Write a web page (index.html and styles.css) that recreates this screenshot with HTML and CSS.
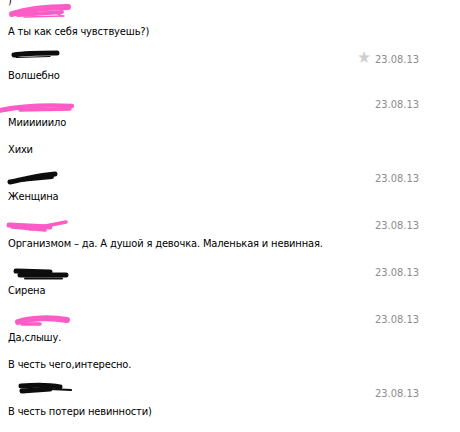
FILE: index.html
```html
<!DOCTYPE html>
<html lang="ru">
<head>
<meta charset="UTF-8" />
<title>Диалог</title>
<link rel="stylesheet" href="styles.css">
</head>
<body>

<svg width="0" height="0" class="defs">
  <filter id="marker"><feGaussianBlur stdDeviation="0.55"/></filter>
</svg>

<div class="dialog">
  <p class="line cut">)</p>

  <div class="msg first">
    <div class="head">
      <svg class="name pink" viewBox="0 0 80 16" width="80" height="16">
        <path d="M12 8 C25 4 45 1 68 1" stroke-width="6"/>
        <path d="M18 9 L62 6" stroke-width="4"/>
        <path d="M24 11 L64 10" stroke-width="1.4"/>
        <path d="M52 5 L62 10" stroke-width="1.8"/>
      </svg>
    </div>
    <p class="line">А ты как себя чувствуешь?)</p>
  </div>

  <div class="msg">
    <div class="head">
      <svg class="name ink" viewBox="0 0 80 16" width="80" height="16">
        <path d="M14 5 C25 3 45 3 57 3" stroke-width="5"/>
        <path d="M16 7.5 L50 6.5" stroke-width="1.2"/>
      </svg>
      <span class="date"><span class="star">★</span>23.08.13</span>
    </div>
    <p class="line">Волшебно</p>
  </div>

  <div class="msg">
    <div class="head">
      <svg class="name pink" viewBox="0 0 80 16" width="80" height="16">
        <path d="M1 13 C20 9 50 8 72 9" stroke-width="4.5"/>
        <path d="M20 13 L70 12" stroke-width="3.5"/>
        <path d="M0 15 L25 11" stroke-width="1.4"/>
      </svg>
      <span class="date">23.08.13</span>
    </div>
    <p class="line">Миииииило</p>
    <p class="line">Хихи</p>
  </div>

  <div class="msg">
    <div class="head">
      <svg class="name ink" viewBox="0 0 80 16" width="80" height="16">
        <path d="M10 11 C25 8 40 4 55 3" stroke-width="5"/>
        <path d="M20 9 L52 6" stroke-width="4"/>
      </svg>
      <span class="date">23.08.13</span>
    </div>
    <p class="line">Женщина</p>
  </div>

  <div class="msg">
    <div class="head">
      <svg class="name pink" viewBox="0 0 80 16" width="80" height="16">
        <path d="M9 7 L50 9" stroke-width="5"/>
        <path d="M30 11 L66 4" stroke-width="3.5"/>
        <path d="M12 9 L45 12" stroke-width="3.5"/>
      </svg>
      <span class="date">23.08.13</span>
    </div>
    <p class="line">Организмом – да. А душой я девочка. Маленькая и невинная.</p>
  </div>

  <div class="msg">
    <div class="head">
      <svg class="name ink" viewBox="0 0 80 16" width="80" height="16">
        <path d="M16 6 L50 7" stroke-width="5"/>
        <path d="M20 10 L66 10" stroke-width="5"/>
        <path d="M25 13.5 L62 13.5" stroke-width="2"/>
      </svg>
      <span class="date">23.08.13</span>
    </div>
    <p class="line">Сирена</p>
  </div>

  <div class="msg">
    <div class="head">
      <svg class="name pink" viewBox="0 0 80 16" width="80" height="16">
        <path d="M18 10 C30 6 50 5 67 8" stroke-width="6"/>
        <path d="M22 12 L40 12" stroke-width="3.5"/>
      </svg>
      <span class="date">23.08.13</span>
    </div>
    <p class="line">Да,слышу.</p>
    <p class="line">В честь чего,интересно.</p>
  </div>

  <div class="msg">
    <div class="head">
      <svg class="name ink" viewBox="0 0 80 16" width="80" height="16">
        <path d="M21 0 C35 -1 50 -1 60 1" stroke-width="5"/>
        <path d="M22 5 L50 3" stroke-width="5"/>
        <path d="M50 3 L71 4" stroke-width="2.2"/>
      </svg>
      <span class="date">23.08.13</span>
    </div>
    <p class="line">В честь потери невинности)</p>
  </div>
</div>

</body>
</html>
```

FILE: styles.css
```css
/* диалог, старая вёрстка */
body {
  margin: 0;
  background: #fff;
  font-family: Tahoma, "DejaVu Sans Condensed", "Liberation Sans", sans-serif;
  font-size: 11px;
  letter-spacing: -0.15px;
  color: #000;
  overflow: hidden;
}
.defs { position: absolute; }
.dialog { padding: 0 41px 0 8px; }

.line {
  margin: 11px 0 0;
  line-height: 16px;
}
.line.cut { margin: -7px 0 -3px; }

.msg { padding: 6px 0 7px; }
.msg.first { padding: 0 0 4px; }

.head {
  display: flex;
  align-items: center;
  height: 16px;
  line-height: 16px;
}
.head + .line { margin-top: 2px; }

.name {
  display: block;
  margin-left: -8px;
  overflow: visible;
  fill: none;
  stroke-linecap: round;
  stroke-linejoin: round;
  filter: url(#marker);
}
.name.pink { stroke: #fd5cc6; }
.name.ink { stroke: #111; }

.date {
  margin-left: auto;
  color: #8c8c8c;
  letter-spacing: 0;
}
.star {
  color: #cfcfcf;
  font-size: 17px;
  margin-right: 4px;
}
```
